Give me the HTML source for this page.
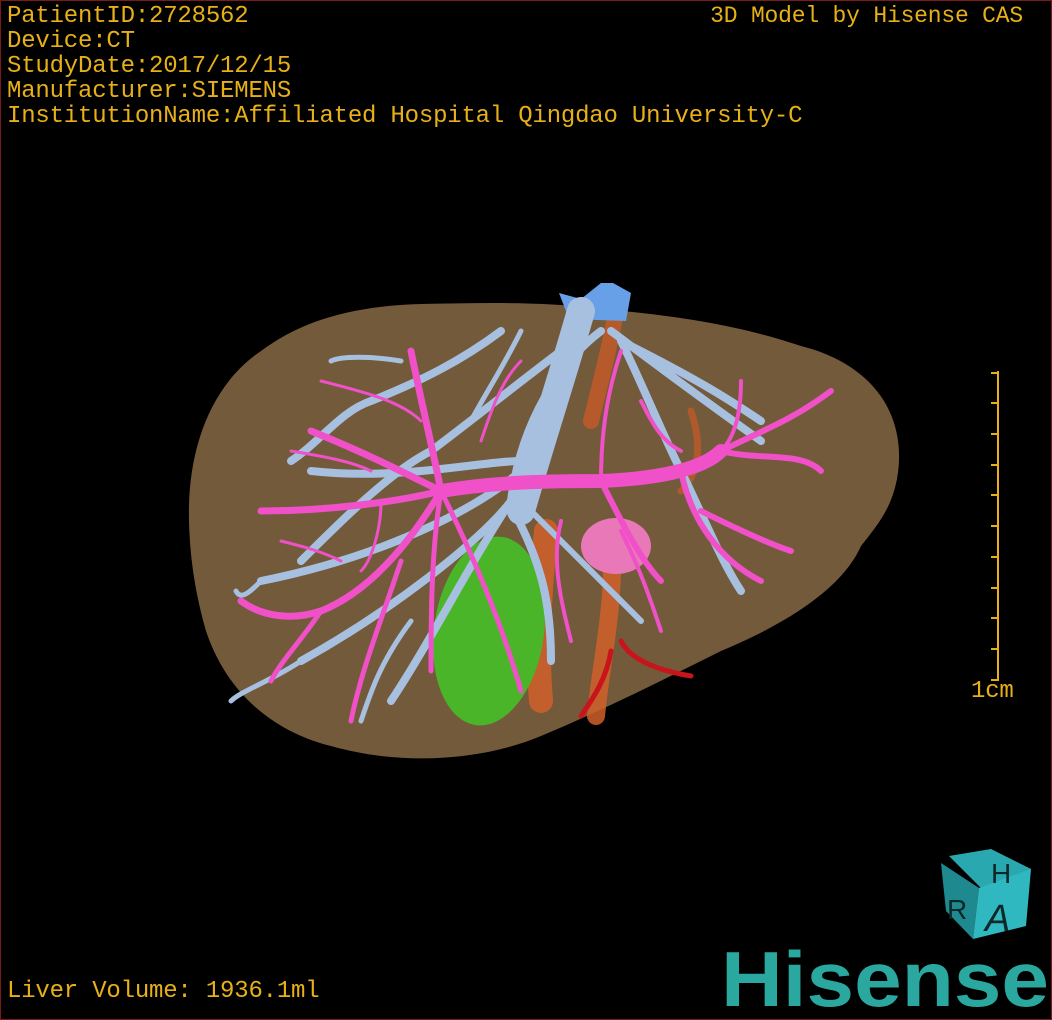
<!DOCTYPE html>
<html><head><meta charset="utf-8"><style>
html,body{margin:0;padding:0;background:#000}
#c{position:relative;width:1050px;height:1018px;border:1px solid #7a1a1a;background:#000;overflow:hidden;font-family:"Liberation Mono","Noto Sans CJK SC",monospace}
.t{position:absolute;color:#e8b018;font-size:24px;line-height:25px;letter-spacing:-0.2px;white-space:pre}
svg{position:absolute;left:0;top:0}
</style></head><body><div id="c">
<svg width="1050" height="1018" viewBox="0 0 1050 1018">
<path d="M188,520 C186,440 215,380 260,350 C300,320 350,305 420,303 C480,302 540,300 600,308 C680,315 740,325 800,345 C860,360 900,400 898,460 C896,500 880,520 860,545 C840,590 780,625 720,650 C660,680 600,710 540,735 C480,760 400,765 330,745 C270,730 225,690 205,630 C195,595 189,560 188,520Z" fill="#735a3a"/>
<g fill="none" stroke-linecap="round">
<path d="M545,530 C540,580 535,640 540,700" stroke="#d0602a" stroke-width="24" opacity=".85"/>
<path d="M610,540 C615,600 600,660 595,715" stroke="#d0602a" stroke-width="18" opacity=".85"/>
<path d="M590,420 C600,380 610,340 615,310" stroke="#c85a28" stroke-width="16" opacity=".8"/>
<path d="M690,410 C700,440 700,470 680,490" stroke="#c85a28" stroke-width="7" opacity=".7"/>
<path d="M610,650 C605,680 590,700 580,715M620,640 C630,660 660,670 690,675" stroke="#c8141a" stroke-width="5"/>
</g>
<ellipse cx="488" cy="630" rx="55" ry="95" fill="#4bb52a" transform="rotate(8 488 630)"/>
<ellipse cx="615" cy="545" rx="35" ry="28" fill="#e878b8"/>
<path d="M558,292 L580,298 L600,282 L612,282 L630,292 L625,320 L568,318Z" fill="#68a0e8"/>
<g fill="none" stroke="#a8c0e0" stroke-linecap="round">
<path d="M580,310 C560,380 540,440 520,510" stroke-width="28"/>
<path d="M600,330 C560,360 520,420 510,500" stroke-width="8"/>
<path d="M510,500 C470,560 430,640 390,700 M510,500 C480,540 390,610 300,660 M510,505 C540,560 550,600 550,660" stroke-width="8"/>
<path d="M520,470 C460,520 360,560 260,580 M520,460 C480,460 400,480 310,470" stroke-width="8"/>
<path d="M560,350 C520,380 470,420 430,450 C390,470 340,520 300,560 M500,330 C460,360 420,380 370,400 C340,410 320,440 290,460" stroke-width="8"/>
<path d="M520,330 C500,370 480,400 470,420 M400,360 C370,355 340,355 330,360" stroke-width="5"/>
<path d="M610,330 C650,360 690,390 760,440 M620,340 C640,380 660,430 680,470 M620,340 C700,380 730,400 760,420 M680,470 C700,510 720,560 740,590" stroke-width="8"/>
<path d="M520,500 C540,520 560,540 580,560 C600,580 620,600 640,620" stroke-width="6"/>
<path d="M410,620 C380,660 370,690 360,720 M300,660 C270,680 240,690 230,700 M260,580 C250,590 240,600 235,590" stroke-width="5"/>
</g>
<g fill="none" stroke="#f050c8" stroke-linecap="round">
<path d="M440,490 C500,480 560,480 600,480 C650,478 700,470 720,450" stroke-width="14"/>
<path d="M440,490 C430,440 420,400 410,350 M440,490 C400,470 360,450 310,430 M440,490 C400,500 330,510 260,510 M440,490 C410,540 370,590 320,610 C290,620 260,615 240,600" stroke-width="7"/>
<path d="M440,490 C430,550 430,620 430,670 M440,490 C470,550 500,620 520,690 M400,560 C380,620 360,670 350,720 M320,610 C300,640 280,660 270,680" stroke-width="5"/>
<path d="M600,480 C620,520 640,560 660,580 M720,450 C760,430 790,420 830,390 M720,450 C760,460 800,450 820,470 M680,470 C690,520 720,560 760,580 M700,510 C720,520 760,540 790,550" stroke-width="6"/>
<path d="M600,480 C600,420 610,380 620,350 M640,400 C650,420 660,440 680,450 M740,380 C740,420 730,440 720,450 M560,520 C550,560 560,600 570,640 M620,530 C640,570 650,600 660,630" stroke-width="4"/>
<path d="M320,380 C360,390 400,400 420,420 M290,450 C320,455 350,460 370,470 M280,540 C300,545 320,550 340,560 M380,500 C380,530 370,560 360,570 M480,440 C490,410 500,380 520,360" stroke-width="3"/>
</g>
<g stroke="#e8b018" stroke-width="2" fill="none"><path d="M997,370 V680 M990,372 H997 M990,402 H997 M990,433 H997 M990,464 H997 M990,494 H997 M990,525 H997 M990,556 H997 M990,587 H997 M990,617 H997 M990,648 H997 M990,679 H997"/></g>
<polygon points="948,855 990,848 1030,868 1020,880 980,887" fill="#2aa8b0"/>
<polygon points="940,862 978,887 972,938 945,910" fill="#1e8a90"/>
<polygon points="978,887 1030,868 1025,925 972,938" fill="#30b8c0"/>
<text x="990" y="882" font-family="Liberation Sans,sans-serif" font-size="28" fill="#0c2828">H</text>
<text x="946" y="918" font-family="Liberation Sans,sans-serif" font-size="28" fill="#0c2828">R</text>
<text x="984" y="930" font-family="Liberation Sans,sans-serif" font-size="38" font-style="italic" fill="#0c2828">A</text>
<text x="720" y="1005" font-family="Liberation Sans,sans-serif" font-weight="bold" font-size="78" fill="#2aa8a0" textLength="328" lengthAdjust="spacingAndGlyphs">Hisense</text>
</svg>
<div class="t" style="left:6px;top:3px">PatientID:2728562
Device:CT
StudyDate:2017/12/15
Manufacturer:SIEMENS
InstitutionName:Affiliated Hospital Qingdao University-C</div>
<div class="t" style="right:28px;top:3px;font-size:23px">3D Model by Hisense CAS</div>
<div class="t" style="left:970px;top:678px">1cm</div>
<div class="t" style="left:6px;top:978px">Liver Volume: 1936.1ml</div>
</div></body></html>
